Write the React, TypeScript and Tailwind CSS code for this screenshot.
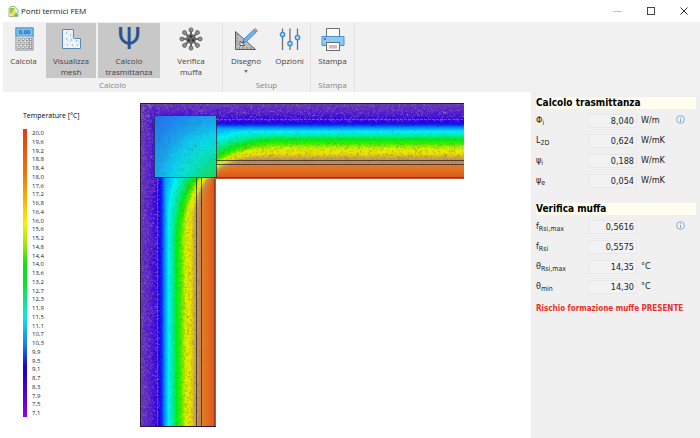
import type { ReactNode } from 'react';

interface ResultRow {
  id: string;
  symbol: string;
  sub: string;
  value: string;
  unit?: string;
}

const TEMPERATURES = [
  '20,0', '19,6', '19,2', '18,8', '18,4', '18,0', '17,6', '17,2', '16,8', '16,4', '16,0',
  '15,6', '15,2', '14,8', '14,4', '14,0', '13,6', '13,2', '12,7', '12,3', '11,9', '11,5',
  '11,1', '10,7', '10,3', '9,9', '9,5', '9,1', '8,7', '8,3', '7,9', '7,5', '7,1',
];

const TRANSMITTANCE: ResultRow[] = [
  { id: 'phi-i', symbol: 'Φ', sub: 'i', value: '8,040', unit: 'W/m' },
  { id: 'l2d', symbol: 'L', sub: '2D', value: '0,624', unit: 'W/mK' },
  { id: 'psi-i', symbol: 'ψ', sub: 'i', value: '0,188', unit: 'W/mK' },
  { id: 'psi-e', symbol: 'ψ', sub: 'e', value: '0,054', unit: 'W/mK' },
];

const MOULD: ResultRow[] = [
  { id: 'frsi-max', symbol: 'f', sub: 'Rsi,max', value: '0,5616' },
  { id: 'frsi', symbol: 'f', sub: 'Rsi', value: '0,5575' },
  { id: 'theta-max', symbol: 'θ', sub: 'Rsi,max', value: '14,35', unit: '°C' },
  { id: 'theta-min', symbol: 'θ', sub: 'min', value: '14,30', unit: '°C' },
];

// Colour through the wall, by depth from the outer face
const WALL_STOPS: [number, number, number, number][] = [
  [0, 104, 56, 176],
  [8, 92, 36, 200],
  [15, 60, 8, 215],
  [19, 30, 0, 225],
  [21, 5, 40, 250],
  [24, 0, 140, 255],
  [28, 0, 240, 250],
  [32, 0, 235, 170],
  [36, 0, 238, 20],
  [40, 60, 238, 0],
  [45, 215, 240, 0],
  [50, 240, 225, 0],
  [54, 205, 170, 70],
  [58, 190, 140, 90],
  [61, 215, 130, 50],
  [66, 226, 112, 28],
  [72, 224, 92, 30],
  [76, 190, 80, 60],
];

// Where each depth crosses the diagonal of the corner
const DIAGONAL: [number, number][] = [
  [0, 0], [12, 12], [20, 22], [28, 50], [36, 63], [47, 69], [60, 73], [76, 76],
];

function segment<T extends number[]>(stops: T[], d: number) {
  let i = 0;
  while (i < stops.length - 2 && stops[i + 1][0] < d) i++;
  const a = stops[i];
  const b = stops[i + 1];
  const t = (d - a[0]) / (b[0] - a[0]);
  return a.map((v, n) => v + (b[n] - v) * t);
}

const ISOTHERMS = Array.from({ length: 77 }, (_, d) => {
  const [, r, g, b] = segment(WALL_STOPS, d);
  const mid = segment(DIAGONAL, d)[1];
  const start = mid + 3 * (mid - d);
  const k = (8 * mid - 4 * d - start) / 3;
  return {
    fill: `rgb(${Math.round(r)},${Math.round(g)},${Math.round(b)})`,
    path: `M${d} 324V${start}C${d} ${k} ${k} ${d} ${start} ${d}H324V324Z`,
  };
});

// Mesh nodes scattered over both wings, between two depths
function scatter(count: number, from: number, to: number, seed: number) {
  let s = seed;
  const next = () => {
    s = (s * 16807) % 2147483647;
    return s / 2147483647;
  };
  let path = '';
  for (let i = 0; i < count; i++) {
    const depth = from + next() * (to - from);
    const along = from + next() * (323 - from);
    const [x, y] = i % 2 ? [depth, along] : [along, depth];
    path += `M${x.toFixed(1)} ${y.toFixed(1)}h1`;
  }
  return path;
}

const COLD_LIGHT = scatter(2400, 1, 19, 71);
const COLD_DARK = scatter(2000, 3, 23, 913);
const WARM_NODES = scatter(1100, 40, 57, 3301);
const ALL_NODES = scatter(2600, 18, 60, 5087);

function ThermalMap() {
  return (
    <svg className="w-[324px] h-[324px] shrink-0" viewBox="0 0 324 324" role="img" aria-label="Temperature">
      <defs>
        <clipPath id="wall">
          <path d="M0 0H324V76H76V324H0Z" />
        </clipPath>
        <radialGradient id="pillar" gradientUnits="userSpaceOnUse" cx="83" cy="83" r="98">
          <stop offset="0.1" stopColor="#20d850" />
          <stop offset="0.26" stopColor="#0cdc90" />
          <stop offset="0.4" stopColor="#08e0d0" />
          <stop offset="0.54" stopColor="#0cd0ec" />
          <stop offset="0.68" stopColor="#18a4ec" />
          <stop offset="0.82" stopColor="#1c88f0" />
          <stop offset="1" stopColor="#2a6cec" />
        </radialGradient>
      </defs>
      <g clipPath="url(#wall)">
        {ISOTHERMS.map((line) => (
          <path key={line.path} d={line.path} fill={line.fill} />
        ))}
        <path d={COLD_LIGHT} stroke="#a080b8" strokeOpacity="0.5" />
        <path d={COLD_DARK} stroke="#2400e8" strokeOpacity="0.5" />
        <path d={WARM_NODES} stroke="#86860c" strokeOpacity="0.5" />
        <rect x="14" y="12" width="62" height="62" fill="url(#pillar)" />
        <path d={ALL_NODES} stroke="#44708c" strokeOpacity="0.25" />
        <g fill="none" stroke="#2b2038" strokeOpacity="0.75">
          <path d="M14.5 12.5H76.5V74.5H14.5Z" />
          <path d="M76 57.5H324M76 61.5H324M56.5 75V324M61.5 75V324" />
          <path d="M76 74.5H324M74.5 76V324" stroke="#7a2c20" />
        </g>
        <path d="M76 16.5H324M17.5 75V324" stroke="#8070c0" strokeDasharray="3 1" strokeOpacity="0.7" />
        <path d="M324 .5H.5V323.5H76" fill="none" stroke="#2c1640" />
      </g>
    </svg>
  );
}

function CalculatorIcon() {
  return (
    <svg className="w-6 h-6" viewBox="0 0 24 24" fill="none">
      <rect x="4" y="1" width="17" height="22" fill="#f4f4f4" stroke="#8a8a8a" />
      <rect x="4" y="1" width="17" height="8" fill="#7cc0f4" stroke="#4a96d8" />
      <text x="12.500" y="7.300" textAnchor="middle" fontSize="6" fontFamily="Liberation Sans" fontWeight="700" fill="#235a94">0.00</text>
      <g fill="#fff" stroke="#808080" strokeWidth="0.8">
        {[11, 15, 19].map((y) =>
          [6, 10, 14, 17.5].map((x) => <rect key={`${x}-${y}`} x={x} y={y} width="2.200" height="2.500" />)
        )}
      </g>
    </svg>
  );
}

function MeshIcon() {
  return (
    <svg className="w-6 h-6" viewBox="0 0 24 24" fill="none">
      <path d="M3.500 2.500H14.500V11.500H21.500V21.500H3.500Z" fill="#eef6fc" stroke="#5c88b4" />
      <path d="M4 9L9 3L14 9L9 14L4 9M9 14L14 11L21 15L15 21L9 14L4 20M9 3V14M9 14H20" stroke="#d0e0ee" strokeWidth="0.6" />
      <path d="M7 6h1M11 8h1M7 12h1M12 13h1M17 14h1M8 18h1M13 18h1M18 18h1" stroke="#5c94c4" />
    </svg>
  );
}

function MouldIcon() {
  return (
    <svg className="w-6 h-6" viewBox="0 0 24 24">
      {[0, 45, 90, 135, 180, 225, 270, 315].map((angle) => (
        <g key={angle} transform={`rotate(${angle} 12 12)`}>
          <path d="M12 8V3" stroke="#666" strokeWidth="2" />
          <circle cx="12" cy="2.900" r="2" fill="#909090" stroke="#5c5c5c" strokeWidth="0.9" />
        </g>
      ))}
      <circle cx="12" cy="12" r="5" fill="#6a6a6a" />
      <g fill="#2e2e2e">
        <circle cx="12" cy="9.500" r="1.200" />
        <circle cx="9.800" cy="13.200" r="1.200" />
        <circle cx="14.200" cy="13.200" r="1.200" />
      </g>
    </svg>
  );
}

function DrawIcon() {
  return (
    <svg className="w-6 h-6" viewBox="0 0 24 24" fill="none">
      <path fillRule="evenodd" d="M1.500 4.500L21.500 22.500H1.500ZM6 14V18.500H11Z" fill="#bdbdbd" stroke="#5e5e5e" />
      <path d="M2 8h2M2 11h2M2 14h2M2 17h2M5 22v-2M9 22v-2M13 22v-2M17 22v-2" stroke="#6c6c6c" strokeWidth="0.7" />
      <path d="M8.500 16L10 12L20 2.500L22.500 5L12.500 14.500Z" fill="#6cb4f0" stroke="#3c7cb8" strokeWidth="0.8" />
      <path d="M20 2.500L21.200 1.400L23.600 3.800L22.500 5Z" fill="#ee9aa0" stroke="#c0606a" strokeWidth="0.7" />
      <path d="M8.500 16L9.200 13.800L10.700 15.300Z" fill="#444" />
    </svg>
  );
}

function SlidersIcon() {
  return (
    <svg className="w-6 h-6" viewBox="0 0 24 24" fill="none">
      <path d="M4.500 1.500V23M12 1.500V23M19.500 1.500V23" stroke="#707070" strokeWidth="1.300" />
      <g fill="#a8dcfa" stroke="#3c8ccc" strokeWidth="1.300">
        <circle cx="4.500" cy="7.500" r="2.200" />
        <circle cx="12" cy="16.500" r="2.200" />
        <circle cx="19.500" cy="10.500" r="2.200" />
      </g>
    </svg>
  );
}

function PrinterIcon() {
  return (
    <svg className="w-6 h-6" viewBox="0 0 24 24" fill="none">
      <path d="M5.500 9V1.500H18.500V9" fill="#fafafa" stroke="#6c6c6c" />
      <path d="M1 9.500H23V18.500H1Z" fill="#8cc8f8" stroke="#4a90cc" />
      <circle cx="4" cy="12" r="0.900" fill="#245c94" />
      <rect x="5.500" y="15.500" width="13" height="8" fill="#fafafa" stroke="#6c6c6c" />
      <path d="M8 18H16V21.500H8Z" fill="#c8c0c0" />
    </svg>
  );
}

interface ToolButtonProps {
  icon: ReactNode;
  label: string;
  className: string;
  pressed?: boolean;
  menu?: boolean;
}

function ToolButton({ icon, label, className, pressed, menu }: ToolButtonProps) {
  return (
    <button
      type="button"
      aria-pressed={pressed}
      className={`flex flex-col items-center h-[55px] pt-1 ${pressed ? 'bg-[#c8c8c8]' : ''} ${className}`}
    >
      {icon}
      <span className="mt-1 leading-[11px]">{label}</span>
      {menu && (
        <svg className="w-1 h-1 mt-1" viewBox="0 0 4 4" fill="#777">
          <path d="M0 0H4L2 3Z" />
        </svg>
      )}
    </button>
  );
}

function ToolGroup({ title, children }: { title: string; children: ReactNode }) {
  return (
    <div className="flex flex-col border-r border-[#e4e4e4]">
      <div className="flex">{children}</div>
      <div className="text-center leading-[14px] text-[#858585]">{title}</div>
    </div>
  );
}

function ResultSection({ title, rows }: { title: string; rows: ResultRow[] }) {
  return (
    <section className="pt-[5px] pb-[7px]">
      <h2 className="bg-[#fffdee] text-[10px] leading-[12px] font-bold text-black">{title}</h2>
      <div className="flex items-start pt-[2px]">
        <div className="flex-1">
          {rows.map((row) => (
            <div key={row.id} className="flex items-center h-5">
              <label htmlFor={row.id} className="w-[52px] whitespace-nowrap">
                {row.symbol}
                <sub className="text-[7px]">{row.sub}</sub>
              </label>
              <input
                id={row.id}
                readOnly
                value={row.value}
                className="w-[49px] h-[14px] px-[2px] text-right border border-[#e9e9e9] bg-[#f2f2f2] outline-none"
              />
              <span className="ml-1">{row.unit}</span>
            </div>
          ))}
        </div>
        <button type="button" aria-label="Info" className="mt-1 mr-[11px]">
          <svg className="w-[9px] h-[9px]" viewBox="0 0 9 9" fill="none" stroke="#6ca0cc">
            <circle cx="4.500" cy="4.500" r="3.900" strokeWidth="0.8" />
            <path d="M4.500 4V7M4.500 2.200V3.100" strokeWidth="0.900" />
          </svg>
        </button>
      </div>
    </section>
  );
}

export default function App() {
  return (
    <div className="flex flex-col min-h-screen bg-white text-[8px] text-[#444] font-['Open_Sans','Noto_Sans',sans-serif]">
      {/* Title bar */}
      <header className="flex items-center h-[22px] pl-2 text-[#222]">
        <svg className="w-[11px] h-[11px]" viewBox="0 0 11 11" fill="none">
          <path d="M1 10.500V2L3 .5H7L10 4V10.500Z" fill="#e8f4d8" stroke="#88b060" strokeWidth="0.8" />
          <path d="M2 2H7L5 6L2 8Z" fill="#94c840" />
          <path d="M3 7L6 4L10 8V10H4Z" fill="#f0d868" />
          <path d="M6 10L8 6.500L10.500 10Z" fill="#68a8d8" />
        </svg>
        <h1 className="ml-[2px]">Ponti termici FEM</h1>
        <div className="flex ml-auto h-full">
          <button type="button" aria-label="Minimize" className="flex items-center justify-center w-[33px]">
            <span className="w-[9px] h-px bg-[#c4c4c4]" />
          </button>
          <button type="button" aria-label="Maximize" className="flex items-center justify-center w-[33px]">
            <span className="w-2 h-2 border border-[#444]" />
          </button>
          <button type="button" aria-label="Close" className="flex items-center justify-center w-[33px]">
            <svg className="w-2 h-2" viewBox="0 0 8 8" stroke="#333">
              <path d="M.5 .5L7.500 7.500M7.500 .5L.5 7.500" />
            </svg>
          </button>
        </div>
      </header>

      {/* Ribbon */}
      <nav className="flex ml-[3px] pt-px h-[70px] bg-[#f1f1f1]">
        <ToolGroup title="Calcolo">
          <ToolButton icon={<CalculatorIcon />} label="Calcola" className="w-[41px] mr-[2px]" />
          <ToolButton icon={<MeshIcon />} label="Visualizza mesh" className="w-[50px] mr-[2px]" pressed />
          <ToolButton
            icon={
              <span aria-hidden="true" className="h-6 text-[30px] leading-6 text-[#2c5490] font-['DejaVu_Sans',sans-serif]">
                Ψ
              </span>
            }
            label="Calcolo trasmittanza"
            className="w-[62px]"
            pressed
          />
          <ToolButton icon={<MouldIcon />} label="Verifica muffa" className="w-[40px] mx-[11px]" />
        </ToolGroup>
        <ToolGroup title="Setup">
          <ToolButton icon={<DrawIcon />} label="Disegno" className="w-[46px]" menu />
          <ToolButton icon={<SlidersIcon />} label="Opzioni" className="w-[41px]" />
        </ToolGroup>
        <ToolGroup title="Stampa">
          <ToolButton icon={<PrinterIcon />} label="Stampa" className="w-[43px]" />
        </ToolGroup>
      </nav>

      <div className="flex flex-1">
        {/* Temperature map */}
        <main className="flex flex-1 pl-[23px] pt-[11px]">
          <div className="w-[117px] pt-[7px]">
            <h2 className="text-[7px] leading-[12px] text-black">Temperature [°C]</h2>
            <div className="flex mt-[7px] h-72">
              <div className="w-1 bg-[linear-gradient(#e43c10,#f07808_16%,#f8c000_26%,#f4f400_33%,#90e800_41%,#10e010_47%,#10e030_54%,#10e8e0_65%,#1880e8_75%,#1800c8_83%,#5000dc_92%,#9000f4)]" />
              <ul className="flex flex-col justify-between ml-[5px] text-[6px] leading-[8px] text-[#222]">
                {TEMPERATURES.map((t) => (
                  <li key={t}>{t}</li>
                ))}
              </ul>
            </div>
          </div>
          <ThermalMap />
        </main>

        {/* Results */}
        <aside className="w-[169px] pl-[5px] pr-1 bg-[#f0f0f0] text-[9px] text-[#222] font-['DejaVu_Sans_Condensed','DejaVu_Sans',sans-serif]">
          <ResultSection title="Calcolo trasmittanza" rows={TRANSMITTANCE} />
          <ResultSection title="Verifica muffa" rows={MOULD} />
          <p className="text-[8px] leading-[10px] font-bold text-[#e8302c]">Rischio formazione muffe PRESENTE</p>
        </aside>
      </div>
    </div>
  );
}
